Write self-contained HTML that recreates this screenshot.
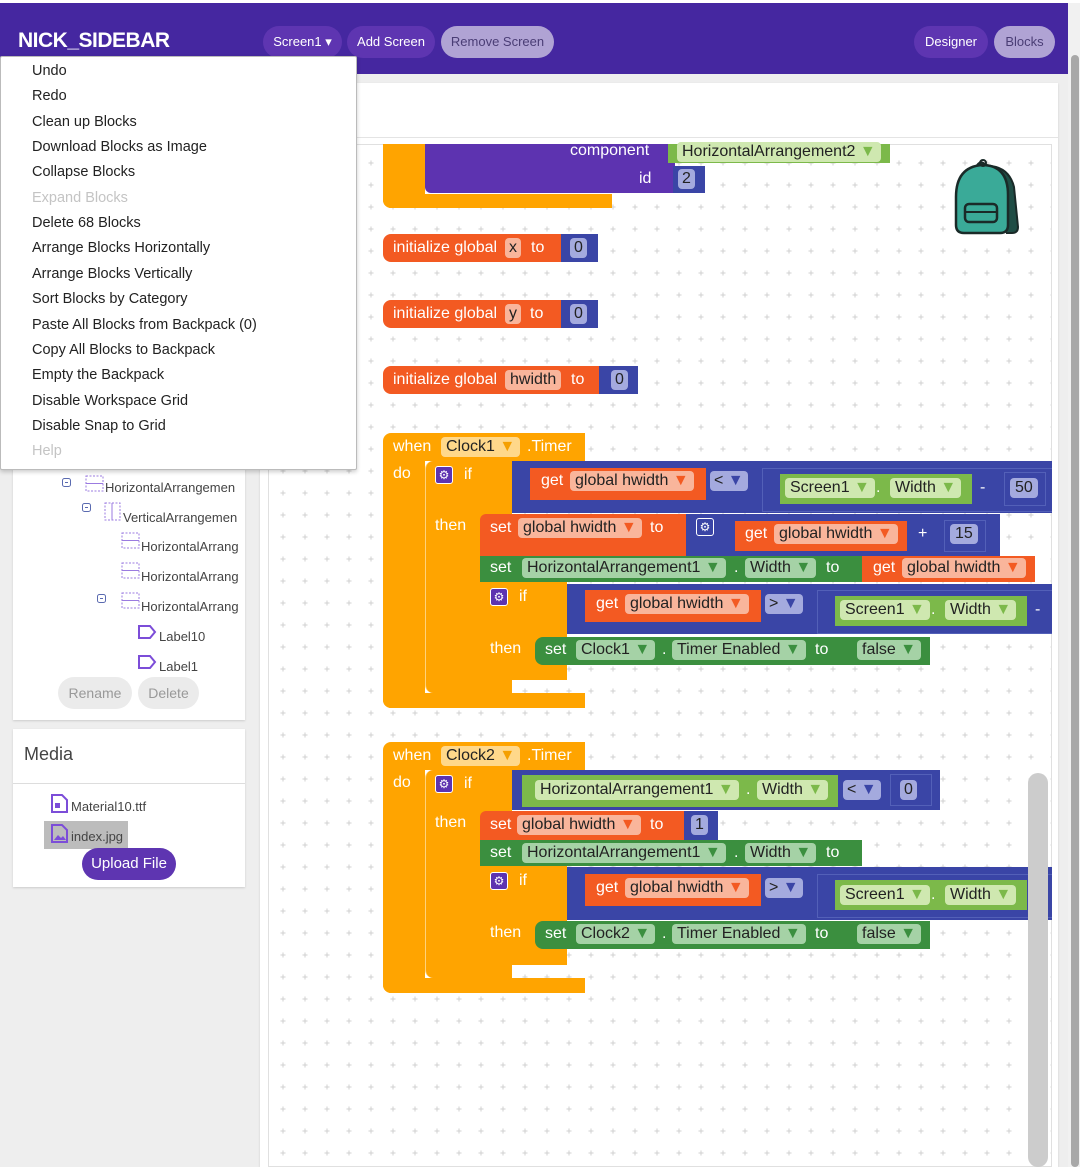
<!DOCTYPE html>
<html><head><meta charset="utf-8"><style>
*{margin:0;padding:0;box-sizing:border-box}
body{width:1080px;height:1167px;overflow:hidden;background:#eeeeee;font-family:"Liberation Sans",sans-serif;position:relative}
.a{position:absolute}
.t{position:absolute;color:#fff;font-size:16px;line-height:20px;white-space:nowrap}
.f{position:absolute;border-radius:4px;color:#222;font-size:16px;line-height:20px;height:20px;padding:0 5px;white-space:nowrap}
.O{background:#ffa400}.R{background:#f35a22}.B{background:#3a45a6}.G{background:#3b8f3f}.L{background:#7cb94a}.P{background:#5d33b0}
.fo{background:#ffd88a}.fr{background:#f9b59b}.fg{background:#a5d2a6}.fl{background:#cfe8b0}.fb{background:#a4aade}
.dd:after{content:" ▾";font-size:14px}
.mi{position:absolute;left:32px;font-size:14.5px;color:#222;line-height:18px}
.tr{position:absolute;font-size:13px;color:#444;line-height:16px}
.btn{position:absolute;height:32px;border-radius:16px;font-size:13px;line-height:32px;text-align:center;color:#fff}
.gear{position:absolute;width:18px;height:18px;border-radius:3px;background:#5d33b0;border:1px solid #fff;color:#fff;font-size:12px;line-height:16px;text-align:center}
</style></head><body>
<div class="a" style="left:0;top:0;width:1080px;height:3px;background:#fff"></div>
<div class="a" style="left:0;top:3px;width:1068px;height:71px;background:#4527a0"></div>
<div class="a" style="left:18px;top:29px;color:#fff;font-size:21px;font-weight:bold;letter-spacing:-0.5px">NICK_SIDEBAR</div>
<div class="btn" style="left:263px;top:26px;width:79px;background:#5e35b1">Screen1 ▾</div>
<div class="btn" style="left:347px;top:26px;width:88px;background:#5e35b1">Add Screen</div>
<div class="btn" style="left:441px;top:26px;width:113px;background:#b0a3d4;color:#4a3d75">Remove Screen</div>
<div class="btn" style="left:914px;top:26px;width:74px;background:#5e35b1">Designer</div>
<div class="btn" style="left:994px;top:26px;width:61px;background:#b0a3d4;color:#4a3d75">Blocks</div>
<!-- page scrollbar -->
<div class="a" style="left:1068px;top:3px;width:12px;height:1164px;background:#f1f1f1"></div>
<div class="a" style="left:1071px;top:55px;width:8px;height:1112px;background:#a8a8a8;border-radius:4px"></div>

<!-- workspace panel -->
<div class="a" style="left:260px;top:83px;width:798px;height:1084px;background:#fff;box-shadow:0 1px 2px #ccc"></div>
<div class="a" style="left:260px;top:137px;width:798px;height:1px;background:#e4e4e4"></div>
<svg class="a" style="left:268px;top:144px" width="784" height="1023">
<defs><pattern id="p" width="22" height="22" patternUnits="userSpaceOnUse" x="4" y="8"><path d="M8.5 11h5M11 8.5v5" stroke="#d0d0d0" stroke-width="1"/></pattern></defs>
<rect width="784" height="1023" fill="url(#p)"/><rect x="0.5" y="0.5" width="783" height="1022" fill="none" stroke="#e0e0e0"/></svg>

<!-- top partial block -->
<div class="a O" style="left:383px;top:144px;width:42px;height:64px;border-radius:0 0 0 8px"></div>
<div class="a O" style="left:383px;top:194px;width:229px;height:14px;border-radius:0 0 0 8px"></div>
<div class="a P" style="left:425px;top:144px;width:250px;height:49px;border-radius:0 0 0 6px"></div>
<div class="t" style="left:570px;top:141px">component</div>
<div class="t" style="left:639px;top:169px">id</div>
<div class="a L" style="left:668px;top:144px;width:222px;height:19px"></div>
<div class="f fl" style="left:677px;top:142px">HorizontalArrangement2 <span style="color:#7cb94a">▼</span></div>
<div class="a B" style="left:673px;top:166px;width:32px;height:27px"></div>
<div class="f fb" style="left:678px;top:169px;padding:0 4px">2</div>

<!-- init globals -->
<div class="a R" style="left:383px;top:234px;width:178px;height:28px;border-radius:8px 0 0 8px"></div>
<div class="t" style="left:393px;top:238px">initialize global</div>
<div class="f fr" style="left:505px;top:238px;padding:0 4px">x</div>
<div class="t" style="left:531px;top:238px">to</div>
<div class="a B" style="left:561px;top:234px;width:37px;height:28px"></div>
<div class="f fb" style="left:570px;top:238px;padding:0 4px">0</div>

<div class="a R" style="left:383px;top:300px;width:178px;height:28px;border-radius:8px 0 0 8px"></div>
<div class="t" style="left:393px;top:304px">initialize global</div>
<div class="f fr" style="left:505px;top:304px;padding:0 4px">y</div>
<div class="t" style="left:530px;top:304px">to</div>
<div class="a B" style="left:561px;top:300px;width:37px;height:28px"></div>
<div class="f fb" style="left:570px;top:304px;padding:0 4px">0</div>

<div class="a R" style="left:383px;top:366px;width:216px;height:28px;border-radius:8px 0 0 8px"></div>
<div class="t" style="left:393px;top:370px">initialize global</div>
<div class="f fr" style="left:505px;top:370px">hwidth</div>
<div class="t" style="left:571px;top:370px">to</div>
<div class="a B" style="left:599px;top:366px;width:39px;height:28px"></div>
<div class="f fb" style="left:611px;top:370px;padding:0 4px">0</div>

<!-- backpack -->
<svg class="a" style="left:950px;top:157px" width="78" height="80" viewBox="0 0 78 80">
<path d="M26 10 q4-8 10-2 l10 2 q14 4 18 20 l4 40 q0 6-6 6 h-6" fill="#1f4d45" stroke="#1a2a28" stroke-width="2"/>
<path d="M6 40 q0-30 26-32 q26 0 26 30 v30 q0 8-8 8 h-36 q-8 0-8-8z" fill="#3aaa98" stroke="#1a2a28" stroke-width="2.5"/>
<rect x="15" y="47" width="32" height="18" rx="4" fill="#3aaa98" stroke="#1a2a28" stroke-width="2.5"/>
<path d="M15 55 h32" stroke="#1a2a28" stroke-width="2"/>
<circle cx="33" cy="6" r="3" fill="none" stroke="#1a2a28" stroke-width="2"/></svg>

<!-- Clock1 -->
<div class="a O" style="left:383px;top:433px;width:202px;height:28px;border-radius:8px 0 0 0"></div>
<div class="a O" style="left:383px;top:461px;width:42px;height:247px;border-radius:0 0 0 8px"></div>
<div class="a O" style="left:383px;top:693px;width:202px;height:15px;border-radius:0 0 0 8px"></div>
<div class="t" style="left:393px;top:437px">when</div>
<div class="f fo" style="left:441px;top:437px">Clock1 <span style="color:#f5a000">▼</span></div>
<div class="t" style="left:527px;top:437px">.Timer</div>
<div class="t" style="left:393px;top:464px">do</div>
<div class="a O" style="left:425px;top:461px;width:87px;height:232px;border-radius:8px 0 0 8px;border-left:1px solid #ffd27a"></div>
<div class="gear" style="left:435px;top:466px">⚙</div>
<div class="t" style="left:464px;top:465px">if</div>
<div class="t" style="left:435px;top:516px">then</div>
<div class="a B" style="left:512px;top:461px;width:540px;height:52px"></div>
<div class="a R" style="left:530px;top:468px;width:176px;height:32px"></div>
<div class="t" style="left:541px;top:471px">get</div>
<div class="f fr" style="left:570px;top:471px">global hwidth <span style="color:#f35a22">▼</span></div>
<div class="f fb" style="left:710px;top:471px;padding:0 4px">&lt; <span style="color:#3a45a6">▼</span></div>
<div class="a" style="left:762px;top:468px;width:290px;height:44px;border:1px solid #5360b8;border-right:0;background:#3a45a6"></div>
<div class="a L" style="left:780px;top:474px;width:192px;height:30px"></div>
<div class="f fl" style="left:785px;top:478px">Screen1 <span style="color:#7cb94a">▼</span></div>
<div class="t" style="left:876px;top:478px;color:#fff">.</div>
<div class="f fl" style="left:890px;top:478px">Width <span style="color:#7cb94a">▼</span></div>
<div class="t" style="left:980px;top:478px">-</div>
<div class="a B" style="left:1004px;top:472px;width:42px;height:34px;border:1px solid #5360b8"></div>
<div class="f fb" style="left:1010px;top:478px">50</div>

<div class="a R" style="left:480px;top:514px;width:206px;height:42px;border-radius:6px 0 0 0"></div>
<div class="t" style="left:490px;top:518px">set</div>
<div class="f fr" style="left:518px;top:518px">global hwidth <span style="color:#f35a22">▼</span></div>
<div class="t" style="left:650px;top:518px">to</div>
<div class="a B" style="left:686px;top:514px;width:314px;height:42px"></div>
<div class="gear" style="left:696px;top:518px;background:#3a45a6">⚙</div>
<div class="a R" style="left:735px;top:521px;width:172px;height:30px"></div>
<div class="t" style="left:745px;top:524px">get</div>
<div class="f fr" style="left:774px;top:524px">global hwidth <span style="color:#f35a22">▼</span></div>
<div class="t" style="left:918px;top:524px">+</div>
<div class="a B" style="left:944px;top:520px;width:42px;height:32px;border:1px solid #5360b8"></div>
<div class="f fb" style="left:950px;top:524px">15</div>

<div class="a G" style="left:480px;top:556px;width:382px;height:26px"></div>
<div class="t" style="left:490px;top:558px">set</div>
<div class="f fg" style="left:522px;top:558px">HorizontalArrangement1 <span style="color:#3b8f3f">▼</span></div>
<div class="t" style="left:734px;top:558px">.</div>
<div class="f fg" style="left:745px;top:558px">Width <span style="color:#3b8f3f">▼</span></div>
<div class="t" style="left:826px;top:558px">to</div>
<div class="a R" style="left:862px;top:556px;width:173px;height:26px"></div>
<div class="t" style="left:873px;top:558px">get</div>
<div class="f fr" style="left:902px;top:558px">global hwidth <span style="color:#f35a22">▼</span></div>

<div class="a O" style="left:480px;top:582px;width:87px;height:98px;border-radius:0 0 0 6px"></div>
<div class="gear" style="left:490px;top:588px">⚙</div>
<div class="t" style="left:519px;top:587px">if</div>
<div class="t" style="left:490px;top:639px">then</div>
<div class="a B" style="left:567px;top:584px;width:485px;height:50px"></div>
<div class="a R" style="left:585px;top:590px;width:176px;height:32px"></div>
<div class="t" style="left:596px;top:594px">get</div>
<div class="f fr" style="left:625px;top:594px">global hwidth <span style="color:#f35a22">▼</span></div>
<div class="f fb" style="left:765px;top:594px;padding:0 4px">&gt; <span style="color:#3a45a6">▼</span></div>
<div class="a" style="left:817px;top:590px;width:235px;height:44px;border:1px solid #5360b8;border-right:0;background:#3a45a6"></div>
<div class="a L" style="left:835px;top:596px;width:192px;height:30px"></div>
<div class="f fl" style="left:840px;top:600px">Screen1 <span style="color:#7cb94a">▼</span></div>
<div class="t" style="left:931px;top:600px">.</div>
<div class="f fl" style="left:945px;top:600px">Width <span style="color:#7cb94a">▼</span></div>
<div class="t" style="left:1035px;top:600px">-</div>
<div class="a G" style="left:535px;top:637px;width:316px;height:28px;border-radius:8px 0 0 8px"></div>
<div class="t" style="left:545px;top:640px">set</div>
<div class="f fg" style="left:576px;top:640px">Clock1 <span style="color:#3b8f3f">▼</span></div>
<div class="t" style="left:662px;top:640px">.</div>
<div class="f fg" style="left:672px;top:640px">Timer Enabled <span style="color:#3b8f3f">▼</span></div>
<div class="t" style="left:815px;top:640px">to</div>
<div class="a G" style="left:851px;top:637px;width:79px;height:28px"></div>
<div class="f fg" style="left:857px;top:640px">false <span style="color:#3b8f3f">▼</span></div>

<!-- Clock2 -->
<div class="a O" style="left:383px;top:742px;width:202px;height:28px;border-radius:8px 0 0 0"></div>
<div class="a O" style="left:383px;top:770px;width:42px;height:223px;border-radius:0 0 0 8px"></div>
<div class="a O" style="left:383px;top:978px;width:202px;height:15px;border-radius:0 0 0 8px"></div>
<div class="t" style="left:393px;top:746px">when</div>
<div class="f fo" style="left:441px;top:746px">Clock2 <span style="color:#f5a000">▼</span></div>
<div class="t" style="left:527px;top:746px">.Timer</div>
<div class="t" style="left:393px;top:773px">do</div>
<div class="a O" style="left:425px;top:770px;width:87px;height:208px;border-radius:8px 0 0 8px;border-left:1px solid #ffd27a"></div>
<div class="gear" style="left:435px;top:775px">⚙</div>
<div class="t" style="left:464px;top:774px">if</div>
<div class="t" style="left:435px;top:813px">then</div>
<div class="a B" style="left:512px;top:770px;width:428px;height:40px"></div>
<div class="a L" style="left:522px;top:775px;width:316px;height:32px"></div>
<div class="f fl" style="left:535px;top:780px">HorizontalArrangement1 <span style="color:#7cb94a">▼</span></div>
<div class="t" style="left:746px;top:780px">.</div>
<div class="f fl" style="left:757px;top:780px">Width <span style="color:#7cb94a">▼</span></div>
<div class="f fb" style="left:843px;top:780px;padding:0 4px">&lt; <span style="color:#3a45a6">▼</span></div>
<div class="a B" style="left:890px;top:774px;width:42px;height:32px;border:1px solid #5360b8"></div>
<div class="f fb" style="left:900px;top:780px;padding:0 4px">0</div>

<div class="a R" style="left:480px;top:811px;width:204px;height:29px;border-radius:6px 0 0 0"></div>
<div class="t" style="left:490px;top:815px">set</div>
<div class="f fr" style="left:517px;top:815px">global hwidth <span style="color:#f35a22">▼</span></div>
<div class="t" style="left:650px;top:815px">to</div>
<div class="a B" style="left:684px;top:811px;width:34px;height:29px"></div>
<div class="f fb" style="left:691px;top:815px;padding:0 4px">1</div>
<div class="a G" style="left:480px;top:840px;width:382px;height:26px"></div>
<div class="t" style="left:490px;top:843px">set</div>
<div class="f fg" style="left:522px;top:843px">HorizontalArrangement1 <span style="color:#3b8f3f">▼</span></div>
<div class="t" style="left:734px;top:843px">.</div>
<div class="f fg" style="left:745px;top:843px">Width <span style="color:#3b8f3f">▼</span></div>
<div class="t" style="left:826px;top:843px">to</div>
<div class="a O" style="left:480px;top:866px;width:87px;height:99px;border-radius:0 0 0 6px"></div>
<div class="gear" style="left:490px;top:872px">⚙</div>
<div class="t" style="left:519px;top:871px">if</div>
<div class="t" style="left:490px;top:923px">then</div>
<div class="a B" style="left:567px;top:867px;width:485px;height:53px"></div>
<div class="a R" style="left:585px;top:874px;width:176px;height:32px"></div>
<div class="t" style="left:596px;top:878px">get</div>
<div class="f fr" style="left:625px;top:878px">global hwidth <span style="color:#f35a22">▼</span></div>
<div class="f fb" style="left:765px;top:878px;padding:0 4px">&gt; <span style="color:#3a45a6">▼</span></div>
<div class="a" style="left:817px;top:874px;width:235px;height:44px;border:1px solid #5360b8;border-right:0;background:#3a45a6"></div>
<div class="a L" style="left:835px;top:880px;width:192px;height:30px"></div>
<div class="f fl" style="left:840px;top:885px">Screen1 <span style="color:#7cb94a">▼</span></div>
<div class="t" style="left:931px;top:885px">.</div>
<div class="f fl" style="left:945px;top:885px">Width <span style="color:#7cb94a">▼</span></div>
<div class="a G" style="left:535px;top:921px;width:316px;height:28px;border-radius:8px 0 0 8px"></div>
<div class="t" style="left:545px;top:924px">set</div>
<div class="f fg" style="left:576px;top:924px">Clock2 <span style="color:#3b8f3f">▼</span></div>
<div class="t" style="left:662px;top:924px">.</div>
<div class="f fg" style="left:672px;top:924px">Timer Enabled <span style="color:#3b8f3f">▼</span></div>
<div class="t" style="left:815px;top:924px">to</div>
<div class="a G" style="left:851px;top:921px;width:79px;height:28px"></div>
<div class="f fg" style="left:857px;top:924px">false <span style="color:#3b8f3f">▼</span></div>

<!-- workspace scrollbar -->
<div class="a" style="left:1028px;top:773px;width:20px;height:394px;background:#cccccc;border-radius:10px"></div>

<!-- sidebar panels -->
<div class="a" style="left:13px;top:83px;width:232px;height:637px;background:#fff;box-shadow:0 1px 2px #ccc"></div>
<svg class="a" style="left:60px;top:475px" width="190" height="200" font-family="Liberation Sans" font-size="13" fill="#444">
<g fill="none" stroke="#7c5cd8"><rect x="2.5" y="3.5" width="8" height="8" rx="2" stroke="#5a6ab0"/><rect x="22.5" y="28.5" width="8" height="8" rx="2" stroke="#5a6ab0"/><rect x="37.5" y="119.5" width="8" height="8" rx="2" stroke="#5a6ab0"/></g>
<path d="M5 7.5h3M25 32.5h3M40 123.5h3" stroke="#5a6ab0"/>
<g stroke="#9b7be0" stroke-dasharray="2 1.5" fill="none"><rect x="26" y="1" width="17" height="15"/><rect x="45" y="28" width="15" height="17"/><rect x="62" y="58" width="17" height="15"/><rect x="62" y="88" width="17" height="15"/><rect x="62" y="118" width="17" height="15"/></g>
<path d="M26 8.5h17M62 65.5h17M62 95.5h17M62 125.5h17M52 28v17" stroke="#9b7be0"/>
<path d="M79 151h11l5 6-5 6h-11z M79 181h11l5 6-5 6h-11z" fill="none" stroke="#7c4dd8" stroke-width="2"/>
<text x="45" y="17">HorizontalArrangemen</text><text x="63" y="47">VerticalArrangemen</text>
<text x="81" y="106" >HorizontalArrang</text><text x="81" y="76">HorizontalArrang</text><text x="81" y="136">HorizontalArrang</text>
<text x="99" y="166">Label10</text><text x="99" y="196">Label1</text></svg>
<div class="btn" style="left:58px;top:677px;width:74px;background:#ebebeb;color:#999;font-size:14px">Rename</div>
<div class="btn" style="left:138px;top:677px;width:61px;background:#ebebeb;color:#999;font-size:14px">Delete</div>

<div class="a" style="left:13px;top:729px;width:232px;height:158px;background:#fff;box-shadow:0 1px 2px #ccc"></div>
<div class="a" style="left:24px;top:744px;font-size:18px;color:#444">Media</div>
<div class="a" style="left:13px;top:783px;width:232px;height:1px;background:#ddd"></div>
<svg class="a" style="left:50px;top:794px" width="20" height="48"><path d="M2 1h10l5 5v12h-15z" fill="none" stroke="#7c4dd8" stroke-width="2"/><rect x="5" y="9" width="5" height="5" fill="#7c4dd8"/><path d="M2 31h10l5 5v12h-15z" fill="#7c4dd8" opacity=".3"/><path d="M2 31h10l5 5v12h-15z" fill="none" stroke="#7c4dd8" stroke-width="2"/></svg>
<div class="tr" style="left:71px;top:799px">Material10.ttf</div>
<div class="a" style="left:44px;top:821px;width:84px;height:28px;background:#bcbcbc"></div>
<svg class="a" style="left:50px;top:824px" width="20" height="20"><path d="M2 1h10l5 5v12h-15z" fill="none" stroke="#7c4dd8" stroke-width="2"/><path d="M4 16l4-5 3 3 2-2 3 4z" fill="#7c4dd8"/></svg>
<div class="tr" style="left:71px;top:829px;color:#444">index.jpg</div>
<div class="btn" style="left:82px;top:848px;width:94px;background:#5e35b1;font-size:15px">Upload File</div>

<!-- context menu -->
<div class="a" style="left:0;top:56px;width:357px;height:414px;background:#fff;border:1px solid #bbb;border-radius:2px;box-shadow:0 2px 4px rgba(0,0,0,.2)"></div>
<div class="mi" style="top:62px">Undo</div>
<div class="mi" style="top:87px">Redo</div>
<div class="mi" style="top:113px">Clean up Blocks</div>
<div class="mi" style="top:138px">Download Blocks as Image</div>
<div class="mi" style="top:163px">Collapse Blocks</div>
<div class="mi" style="top:189px;color:#c4c4c4">Expand Blocks</div>
<div class="mi" style="top:214px">Delete 68 Blocks</div>
<div class="mi" style="top:239px">Arrange Blocks Horizontally</div>
<div class="mi" style="top:265px">Arrange Blocks Vertically</div>
<div class="mi" style="top:290px">Sort Blocks by Category</div>
<div class="mi" style="top:316px">Paste All Blocks from Backpack (0)</div>
<div class="mi" style="top:341px">Copy All Blocks to Backpack</div>
<div class="mi" style="top:366px">Empty the Backpack</div>
<div class="mi" style="top:392px">Disable Workspace Grid</div>
<div class="mi" style="top:417px">Disable Snap to Grid</div>
<div class="mi" style="top:442px;color:#c4c4c4">Help</div>
</body></html>
